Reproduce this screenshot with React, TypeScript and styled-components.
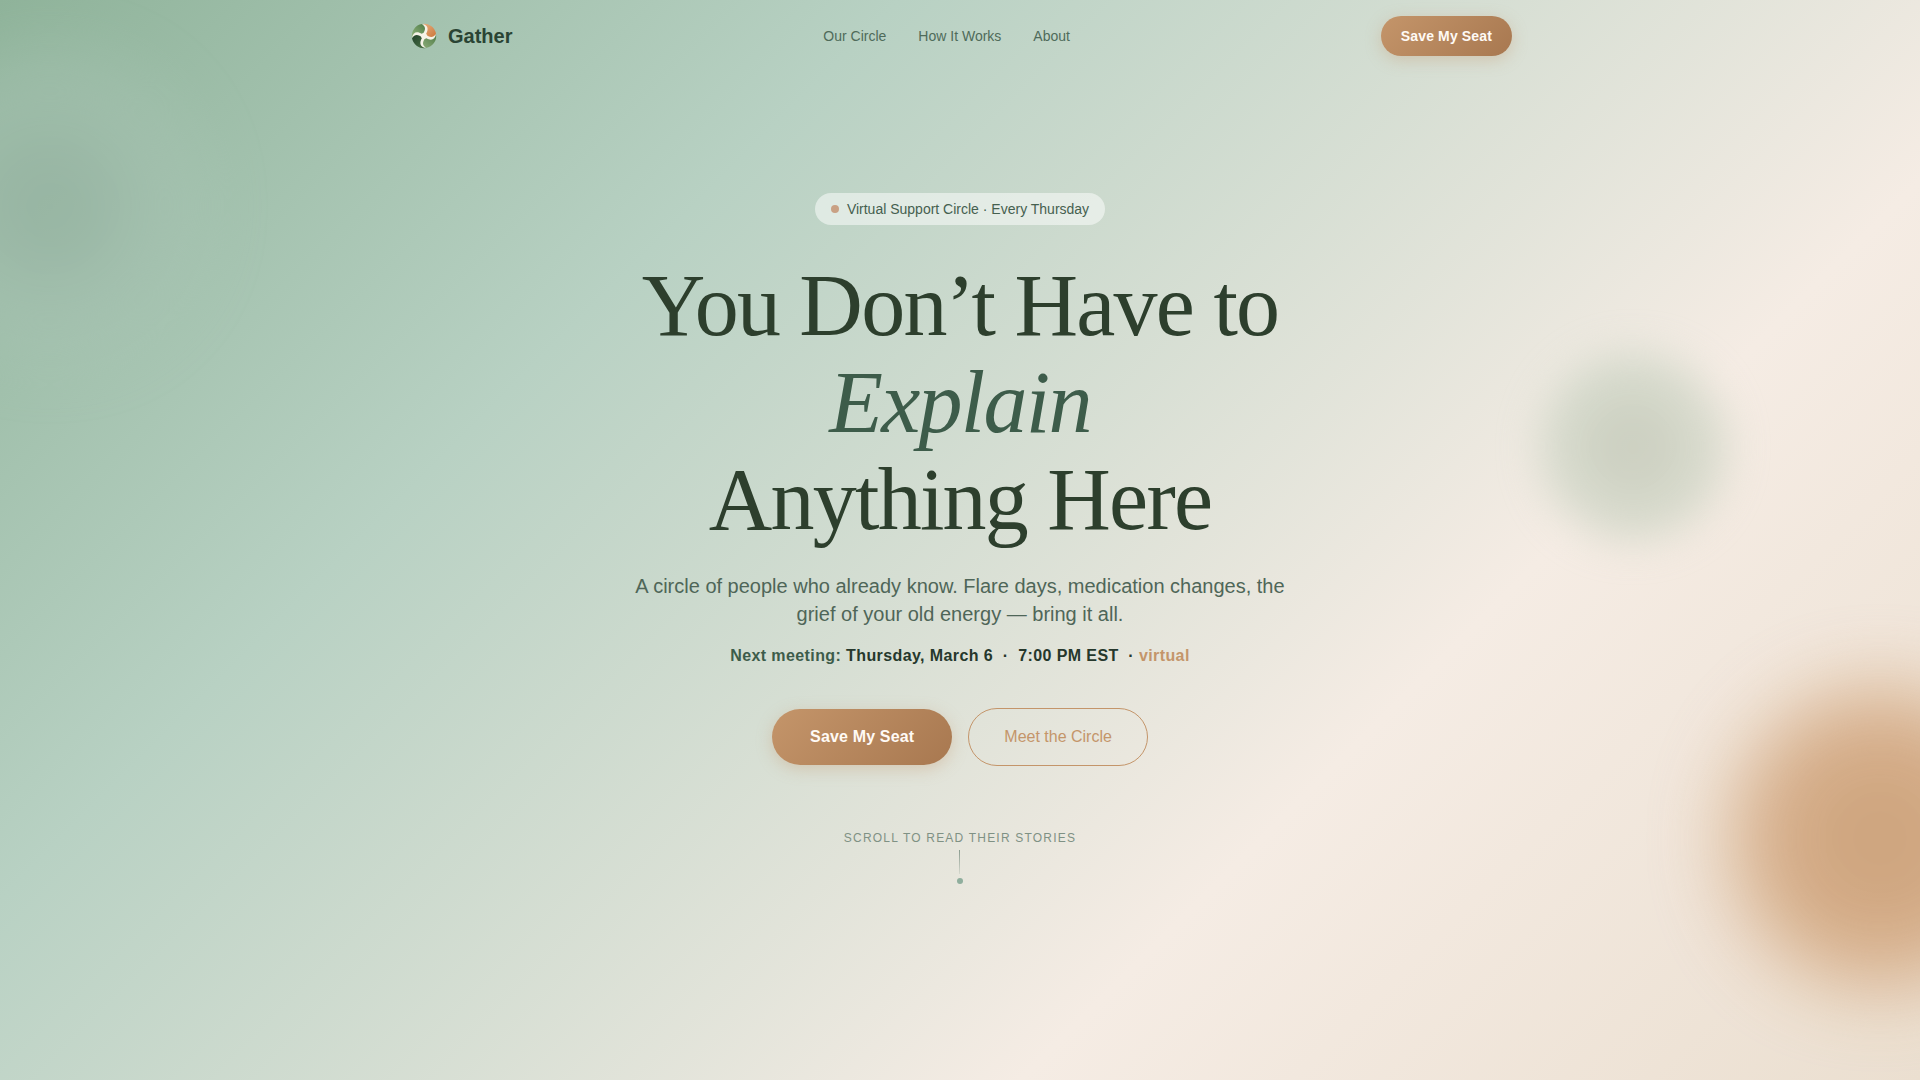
import React from "react";
import styled, { createGlobalStyle } from "styled-components";

const sans = `"Liberation Sans", Arial, sans-serif`;
const serif = `"Liberation Serif", "Times New Roman", serif`;

const GlobalStyle = createGlobalStyle`
  *, *::before, *::after { box-sizing: border-box; }
  body { margin: 0; font-family: ${sans}; color: #2d3b2d; }
  a { text-decoration: none; color: inherit; }
`;

const Page = styled.div`
  position: relative;
  display: flex;
  flex-direction: column;
  min-height: 100vh;
  overflow: hidden;
  background: linear-gradient(135deg, #8fb39a 0%, #b8d1c3 30%, #f5ece4 70%, #ebdfd0 100%);
`;

const Blob = styled.div<{ $size: number; $from: string; $to: string; $blur: number; $opacity: number }>`
  position: absolute;
  width: ${(p) => p.$size}px;
  height: ${(p) => p.$size}px;
  border-radius: 50%;
  background: radial-gradient(circle, ${(p) => p.$from}, ${(p) => p.$to} 70%);
  filter: blur(${(p) => p.$blur}px);
  opacity: ${(p) => p.$opacity};
  pointer-events: none;
`;

const SageBlob = styled(Blob)`
  top: 56px;
  left: -100px;
`;

const MossBlob = styled(Blob)`
  top: 352px;
  right: 10%;
`;

const ClayBlob = styled(Blob)`
  right: -110px;
  bottom: 92px;
`;

const Header = styled.header`
  position: relative;
`;

const HeaderInner = styled.div`
  display: flex;
  align-items: center;
  justify-content: space-between;
  max-width: 1200px;
  margin: 0 auto;
  padding: 16px 48px;
`;

const Brand = styled.a`
  display: flex;
  align-items: center;
  gap: 8px;
  font-size: 20px;
  font-weight: 700;
  line-height: 32px;
  color: #2a4434;
`;

const Nav = styled.nav`
  display: flex;
  gap: 32px;
`;

const NavLink = styled.a`
  font-size: 14px;
  line-height: 24px;
  color: #4f6b5a;
`;

const Button = styled.button<{ $large?: boolean }>`
  font-family: ${sans};
  font-size: ${(p) => (p.$large ? 16 : 14)}px;
  font-weight: 700;
  line-height: ${(p) => (p.$large ? 24 : 20)}px;
  letter-spacing: 0.01em;
  padding: ${(p) => (p.$large ? "16px 38px" : "10px 20px")};
  border: 0;
  border-radius: 999px;
  color: #fffaf5;
  background: linear-gradient(135deg, #c4956a, #a87850);
  box-shadow: 0 4px 16px rgba(196, 149, 106, 0.35);
  cursor: pointer;
`;

const OutlineButton = styled(Button)`
  padding: 16px 35px;
  border: 1px solid #c4956a;
  font-weight: 400;
  letter-spacing: normal;
  color: #c4956a;
  background: transparent;
  box-shadow: none;
`;

const Hero = styled.main`
  position: relative;
  display: flex;
  flex-direction: column;
  align-items: center;
  padding: 121px 24px;
  text-align: center;
`;

const Badge = styled.div`
  display: flex;
  align-items: center;
  gap: 8px;
  padding: 6px 16px;
  border-radius: 999px;
  background: rgba(255, 255, 255, 0.5);
  font-size: 14px;
  line-height: 20px;
  color: #45604f;
`;

const BadgeDot = styled.span`
  width: 8px;
  height: 8px;
  border-radius: 50%;
  background: #c9a184;
`;

const Title = styled.h1`
  max-width: 720px;
  margin: 32px 0 24px;
  font-family: ${serif};
  font-size: 88px;
  font-weight: 400;
  line-height: 97px;
  letter-spacing: -0.02em;
  color: #2d3f2d;

  em {
    display: block;
    color: #3d5c4a;
  }
`;

const Lead = styled.p`
  max-width: 660px;
  margin: 0 0 16px;
  font-size: 20px;
  line-height: 28px;
  color: #4f6658;
`;

const Meeting = styled.p`
  margin: 0 0 40px;
  font-size: 16px;
  font-weight: 700;
  line-height: 24px;
  letter-spacing: 0.025em;
  color: #26382c;
`;

const MeetingLabel = styled.span`
  color: #3d5c4a;
`;

const MeetingPlace = styled.span`
  color: #c4956a;
`;

const Actions = styled.div`
  display: flex;
  align-items: center;
  gap: 16px;
`;

const ScrollHint = styled.div`
  display: flex;
  flex-direction: column;
  align-items: center;
  margin-top: 64px;
  font-size: 12px;
  line-height: 16px;
  letter-spacing: 0.1em;
  text-transform: uppercase;
  color: #7f9184;
`;

const ScrollLine = styled.span`
  width: 1px;
  height: 24px;
  margin: 4px 0;
  background: linear-gradient(#8a9c8f, rgba(138, 156, 143, 0.2));
`;

const ScrollDot = styled.span`
  width: 6px;
  height: 6px;
  border-radius: 50%;
  background: #8fae9d;
`;

const petals = [
  { turn: 0, fill: "url(#petal-clay)" },
  { turn: 90, fill: "url(#petal-leaf)" },
  { turn: 180, fill: "url(#petal-forest)" },
  { turn: 270, fill: "url(#petal-moss)" },
];

const Logo = () => (
  <svg width="32" height="32" viewBox="0 0 32 32" aria-hidden="true">
    <defs>
      <linearGradient id="petal-clay" x1="0" y1="0" x2="1" y2="1">
        <stop offset="0" stopColor="#e6b184" />
        <stop offset="1" stopColor="#cc7436" />
      </linearGradient>
      <linearGradient id="petal-leaf" x1="0" y1="0" x2="1" y2="1">
        <stop offset="0" stopColor="#4d7a45" />
        <stop offset="1" stopColor="#8fae7c" />
      </linearGradient>
      <linearGradient id="petal-forest" x1="0" y1="0" x2="1" y2="1">
        <stop offset="0" stopColor="#4b7346" />
        <stop offset="1" stopColor="#21402b" />
      </linearGradient>
      <linearGradient id="petal-moss" x1="0" y1="0" x2="1" y2="1">
        <stop offset="0" stopColor="#94b77e" />
        <stop offset="1" stopColor="#4a7845" />
      </linearGradient>
    </defs>
    {petals.map((petal) => (
      <path
        key={petal.turn}
        d="M16 16C20 10 19 6 14 4A12 12 0 0 1 28 14C26 19 22 20 16 16Z"
        fill={petal.fill}
        transform={`rotate(${petal.turn} 16 16)`}
      />
    ))}
    {petals.map((petal) => (
      <path
        key={petal.turn}
        d="M14 4C20 5 21 9 18 14L14 15C18 10 18 7 14 4Z"
        fill="#f6f3e8"
        transform={`rotate(${petal.turn} 16 16)`}
      />
    ))}
    <circle cx="16" cy="16" r="3" fill="#f6f3e8" />
  </svg>
);

export default function App() {
  return (
    <>
      <GlobalStyle />
      <Page>
        <SageBlob $size={300} $from="#90ab9c" $to="#adc8b8" $blur={32} $opacity={0.5} />
        <MossBlob $size={190} $from="#adb9a5" $to="#cbd5c5" $blur={20} $opacity={0.6} />
        <ClayBlob $size={300} $from="#c4956a" $to="#d6aa82" $blur={40} $opacity={0.85} />
        <Header>
          <HeaderInner>
            <Brand href="#top">
              <Logo />
              Gather
            </Brand>
            <Nav aria-label="Main">
              <NavLink href="#circle">Our Circle</NavLink>
              <NavLink href="#how">How It Works</NavLink>
              <NavLink href="#about">About</NavLink>
            </Nav>
            <Button type="button">Save My Seat</Button>
          </HeaderInner>
        </Header>
        <Hero>
          <Badge>
            <BadgeDot />
            Virtual Support Circle · Every Thursday
          </Badge>
          <Title>
            You Don’t Have to <em>Explain</em> Anything Here
          </Title>
          <Lead>
            A circle of people who already know. Flare days, medication changes, the grief of your old energy — bring it
            all.
          </Lead>
          <Meeting>
            <MeetingLabel>Next meeting:</MeetingLabel> Thursday, March 6{"\u00a0 · \u00a0"}7:00 PM EST{"\u00a0 · "}
            <MeetingPlace>virtual</MeetingPlace>
          </Meeting>
          <Actions>
            <Button type="button" $large>
              Save My Seat
            </Button>
            <OutlineButton type="button" $large>
              Meet the Circle
            </OutlineButton>
          </Actions>
          <ScrollHint>
            Scroll to read their stories
            <ScrollLine />
            <ScrollDot />
          </ScrollHint>
        </Hero>
      </Page>
    </>
  );
}
